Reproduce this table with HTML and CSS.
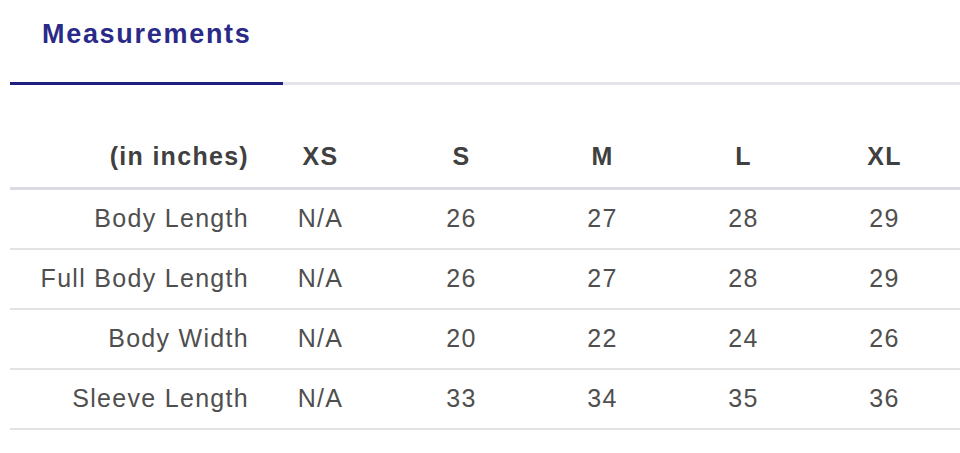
FILE: index.html
```html
<!DOCTYPE html>
<html lang="en">
<head>
<meta charset="utf-8">
<title>Measurements</title>
<link rel="stylesheet" href="styles.css">
</head>
<body>
<div class="page">
  <div class="tabs">
    <div class="tab tab-active">Measurements</div>
  </div>
  <table class="sizes">
    <thead>
      <tr>
        <th class="label">(in inches)</th>
        <th class="size">XS</th>
        <th class="size">S</th>
        <th class="size">M</th>
        <th class="size">L</th>
        <th class="size last">XL</th>
      </tr>
    </thead>
    <tbody>
      <tr>
        <td class="label">Body Length</td>
        <td class="size">N/A</td>
        <td class="size">26</td>
        <td class="size">27</td>
        <td class="size">28</td>
        <td class="size last">29</td>
      </tr>
      <tr>
        <td class="label">Full Body Length</td>
        <td class="size">N/A</td>
        <td class="size">26</td>
        <td class="size">27</td>
        <td class="size">28</td>
        <td class="size last">29</td>
      </tr>
      <tr>
        <td class="label">Body Width</td>
        <td class="size">N/A</td>
        <td class="size">20</td>
        <td class="size">22</td>
        <td class="size">24</td>
        <td class="size last">26</td>
      </tr>
      <tr>
        <td class="label">Sleeve Length</td>
        <td class="size">N/A</td>
        <td class="size">33</td>
        <td class="size">34</td>
        <td class="size">35</td>
        <td class="size last">36</td>
      </tr>
    </tbody>
  </table>
</div>
</body>
</html>
```

FILE: styles.css
```css
html, body {
  margin: 0;
  padding: 0;
  background: #ffffff;
}

body {
  font-family: "Liberation Sans", Arial, sans-serif;
}

.page {
  padding-left: 10px;
}

.tabs {
  display: flex;
  border-bottom: 3px solid #e4e4e9;
  padding-top: 19px;
}

.tab {
  padding: 0 32px 33px 32px;
  font-size: 27px;
  line-height: 30px;
  font-weight: bold;
  letter-spacing: 1.7px;
  color: #2a2a88;
  white-space: nowrap;
}

.tab-active {
  border-bottom: 3px solid #1f1f80;
  margin-bottom: -3px;
}

.sizes {
  margin-top: 40px;
  border-collapse: separate;
  border-spacing: 0;
  table-layout: fixed;
  font-size: 25px;
  line-height: 30px;
  letter-spacing: 1.3px;
}

.sizes th {
  font-weight: bold;
  color: #404040;
  padding-top: 16px;
  padding-bottom: 16px;
  border-bottom: 3px solid #dadae3;
}

.sizes td {
  font-weight: normal;
  color: #4f4f4f;
  padding-top: 13px;
  padding-bottom: 15px;
  border-bottom: 2px solid #e3e3e3;
}

.sizes .label {
  width: 239px;
  padding-left: 0;
  padding-right: 1px;
  text-align: right;
  white-space: nowrap;
}

.sizes .size {
  width: 141px;
  padding-left: 0;
  padding-right: 0;
  text-align: center;
}

.sizes .size.last {
  padding-right: 5px;
}
```
